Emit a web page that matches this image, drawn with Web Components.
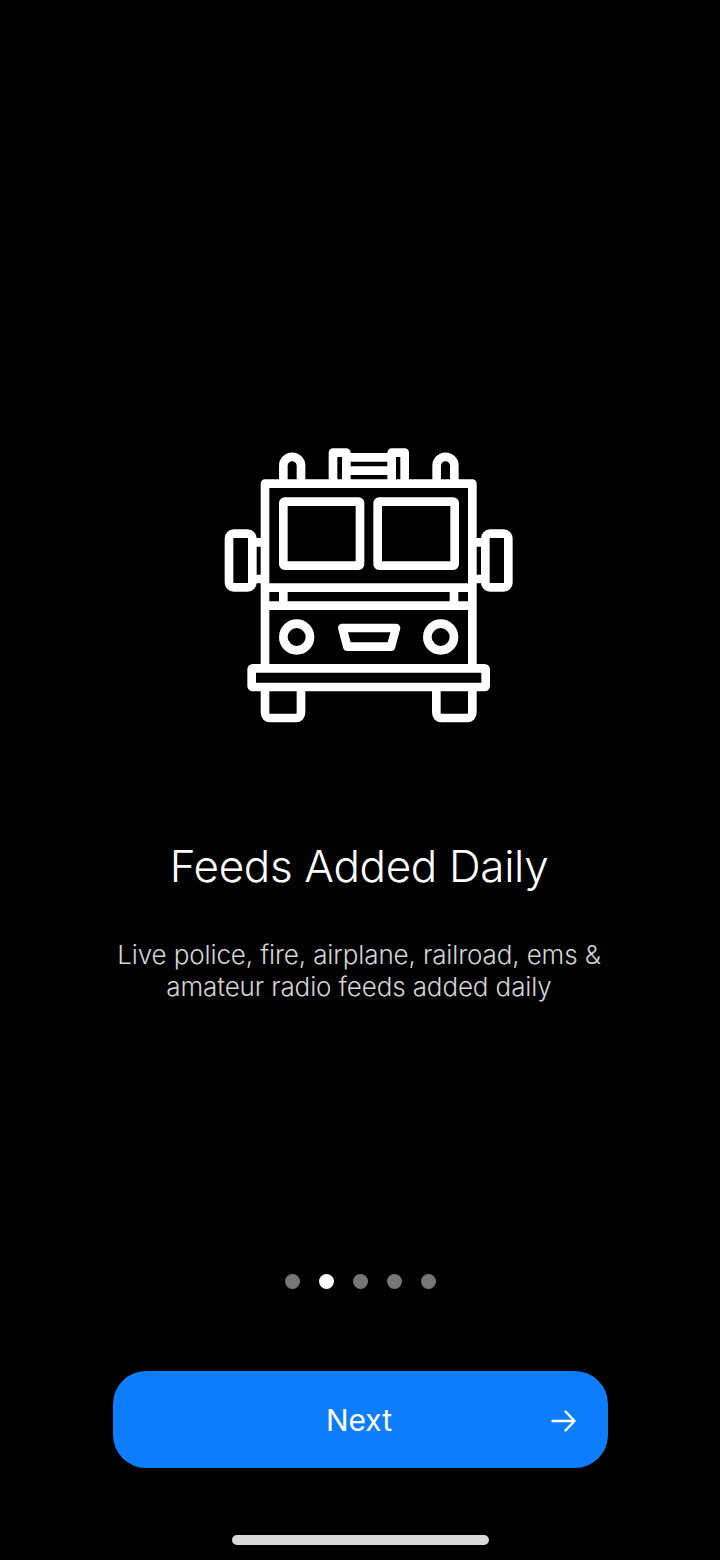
<!DOCTYPE html>
<html lang="en">
<head>
<meta charset="utf-8">
<title>Feeds Added Daily</title>
<style>
  html, body { margin: 0; background: #000; }
</style>
</head>
<body>
<onboarding-screen>
  <truck-icon></truck-icon>
  <span slot="title">Feeds Added Daily</span>
  <span slot="text">Live police, fire, airplane, railroad, ems &amp;<br>amateur radio feeds added daily</span>
  <page-dots slot="dots" count="5" active="1"></page-dots>
  <next-button slot="next">Next</next-button>
  <home-bar slot="bar"></home-bar>
</onboarding-screen>

<script>
// Fire engine outline, coordinates are 3x the size it is shown at
class TruckIcon extends HTMLElement {
  constructor() {
    super();
    this.attachShadow({ mode: 'open' });
    this.shadowRoot.innerHTML = `
      <style>
        :host { display: block; width: 320px; height: 300px; }
        svg { display: block; }
      </style>
      <svg width="320" height="300" viewBox="0 0 960 900" fill="none" stroke="#fff" stroke-width="26" stroke-linejoin="round" stroke-linecap="butt">
        <!-- cab -->
        <path d="M165 700V146H787V700"/>
        <!-- roof lights -->
        <path d="M220 146V92A26.500 26.500 0 0 1 273 92V146"/>
        <path d="M680 146V92A26.500 26.500 0 0 1 733 92V146"/>
        <!-- ladder -->
        <path d="M369 146V53H409V146"/>
        <path d="M545 146V53H584V146"/>
        <path d="M409 67H545M409 107H545"/>
        <!-- mirrors -->
        <rect x="57" y="296" width="70" height="161" rx="14"/>
        <rect x="826" y="296" width="69" height="161" rx="14"/>
        <path d="M127 322H165M127 432H165M787 322H826M787 432H826"/>
        <!-- windscreen -->
        <rect x="220" y="200" width="230" height="192" rx="4"/>
        <rect x="503" y="200" width="231" height="192" rx="4"/>
        <!-- bands under the windscreen -->
        <path d="M165 458H787M165 512H787M220 458V512M732 458V512"/>
        <!-- headlights and grille -->
        <circle cx="260" cy="606" r="40"/>
        <circle cx="692" cy="606" r="40"/>
        <path d="M397 579H558L543 635H412Z"/>
        <!-- bumper and wheels -->
        <rect x="125" y="700" width="702" height="56" rx="3"/>
        <path d="M165 756V832Q165 849 182 849H256Q273 849 273 832V756"/>
        <path d="M679 756V832Q679 849 696 849H770Q787 849 787 832V756"/>
      </svg>
    `;
  }
}

class PageDots extends HTMLElement {
  connectedCallback() {
    const count = Number(this.getAttribute('count')) || 0;
    const active = Number(this.getAttribute('active')) || 0;
    let dots = '';
    for (let i = 0; i < count; i++) {
      dots += `<i class="${i === active ? 'on' : ''}"></i>`;
    }
    this.attachShadow({ mode: 'open' });
    this.shadowRoot.innerHTML = `
      <style>
        :host { display: flex; gap: 19px; }
        i { display: block; width: 15px; height: 15px; border-radius: 50%; background: #767676; }
        i.on { background: #fff; }
      </style>
      ${dots}
    `;
  }
}

class NextButton extends HTMLElement {
  constructor() {
    super();
    this.attachShadow({ mode: 'open' });
    this.shadowRoot.innerHTML = `
      <style>
        :host {
          display: flex;
          box-sizing: border-box;
          width: 495px;
          height: 97px;
          padding-right: 2px;
          align-items: center;
          justify-content: center;
          position: relative;
          border-radius: 33px;
          background: #0d7dfb;
          color: #fff;
          font: 400 30px Inter, "Liberation Sans", sans-serif;
        }
        svg { position: absolute; left: 437px; top: 38px; }
      </style>
      <slot></slot>
      <svg width="28" height="24" viewBox="0 0 28 24" fill="none" stroke="#fff" stroke-width="2.400" stroke-linecap="round" stroke-linejoin="round">
        <path d="M2.500 12H24.500M15.500 2.500L24.500 12L15.500 21.500"/>
      </svg>
    `;
  }
}

class HomeBar extends HTMLElement {
  constructor() {
    super();
    this.attachShadow({ mode: 'open' });
    this.shadowRoot.innerHTML = `
      <style>
        :host { display: block; width: 257px; height: 10px; border-radius: 5px; background: #d9d9d9; }
      </style>
    `;
  }
}

class OnboardingScreen extends HTMLElement {
  constructor() {
    super();
    this.attachShadow({ mode: 'open' });
    this.shadowRoot.innerHTML = `
      <style>
        :host {
          display: flex;
          flex-direction: column;
          align-items: center;
          box-sizing: border-box;
          width: 720px;
          height: 1560px;
          padding-top: 435px;
          background: #000;
          color: #fff;
          font-family: Inter, "Liberation Sans", sans-serif;
        }
        .art { align-self: flex-start; margin-left: 210px; }
        .title {
          margin: 104px 2px 0 0;
          font-size: 44px;
          font-weight: 300;
          letter-spacing: -0.35px;
          line-height: 54px;
          text-align: center;
        }
        .text {
          margin: 46px 2px 0 0;
          font-size: 26px;
          font-weight: 300;
          letter-spacing: -0.12px;
          line-height: 32px;
          text-align: center;
          color: #d4d4d4;
        }
        .dots { margin-top: 271px; }
        .next { margin-top: 82px; }
        .bar { margin-top: 67px; }
      </style>
      <div class="art"><slot></slot></div>
      <div class="title"><slot name="title"></slot></div>
      <div class="text"><slot name="text"></slot></div>
      <div class="dots"><slot name="dots"></slot></div>
      <div class="next"><slot name="next"></slot></div>
      <div class="bar"><slot name="bar"></slot></div>
    `;
  }
}

customElements.define('truck-icon', TruckIcon);
customElements.define('page-dots', PageDots);
customElements.define('next-button', NextButton);
customElements.define('home-bar', HomeBar);
customElements.define('onboarding-screen', OnboardingScreen);
</script>
</body>
</html>
